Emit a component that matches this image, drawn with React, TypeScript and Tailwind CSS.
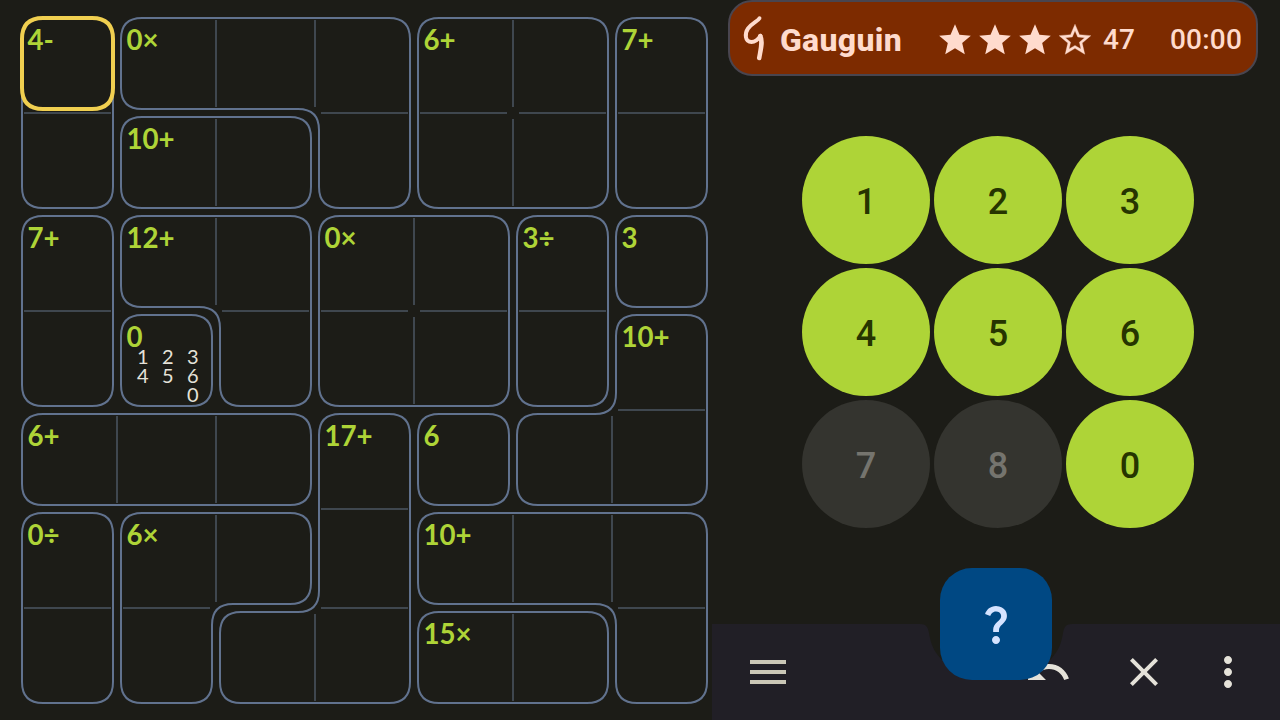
import React from "react";
import { MdClose, MdMenu, MdMoreVert, MdQuestionMark, MdStar, MdStarOutline, MdUndo } from "react-icons/md";

const PITCH = 99;
const INSET = 4;
const RADIUS = 21;

// Each letter is one cage.
const cages = [
  "abbbccd",
  "aeebccd",
  "fgghhij",
  "fkghhil",
  "mmmnoll",
  "pqqnrrr",
  "pqnnssr",
];

const labels: Record<string, string> = {
  "0,0": "4-", "0,1": "0×", "0,4": "6+", "0,6": "7+",
  "1,1": "10+",
  "2,0": "7+", "2,1": "12+", "2,3": "0×", "2,5": "3÷", "2,6": "3",
  "3,1": "0", "3,6": "10+",
  "4,0": "6+", "4,3": "17+", "4,4": "6",
  "5,0": "0÷", "5,1": "6×", "5,4": "10+",
  "6,4": "15×",
};

type Point = [number, number];

function rounded(points: Point[]) {
  const n = points.length;
  let d = "";
  points.forEach((p, i) => {
    const a = points[(i + n - 1) % n];
    const b = points[(i + 1) % n];
    const toward = (q: Point): Point => [
      p[0] + Math.sign(q[0] - p[0]) * RADIUS,
      p[1] + Math.sign(q[1] - p[1]) * RADIUS,
    ];
    d += `${i ? "L" : "M"}${toward(a).join(" ")}Q${p.join(" ")} ${toward(b).join(" ")}`;
  });
  return d + "Z";
}

// Walks the clockwise border of a cage and pulls every corner inwards.
function outline(id: string) {
  const inside = (r: number, c: number) => cages[r]?.[c] === id;
  const next = new Map<string, Point>();
  for (let r = 0; r < 7; r++) {
    for (let c = 0; c < 7; c++) {
      if (!inside(r, c)) continue;
      if (!inside(r - 1, c)) next.set(`${c},${r}`, [c + 1, r]);
      if (!inside(r, c + 1)) next.set(`${c + 1},${r}`, [c + 1, r + 1]);
      if (!inside(r + 1, c)) next.set(`${c + 1},${r + 1}`, [c, r + 1]);
      if (!inside(r, c - 1)) next.set(`${c},${r + 1}`, [c, r]);
    }
  }
  const first = [...next.keys()][0];
  const loop: Point[] = [];
  let key = first;
  do {
    loop.push(key.split(",").map(Number) as Point);
    key = next.get(key)!.join(",");
  } while (key !== first);

  const corners: Point[] = [];
  loop.forEach((p, i) => {
    const a = loop[(i + loop.length - 1) % loop.length];
    const b = loop[(i + 1) % loop.length];
    const [ix, iy] = [p[0] - a[0], p[1] - a[1]];
    const [ox, oy] = [b[0] - p[0], b[1] - p[1]];
    if (ix === ox && iy === oy) return;
    corners.push([p[0] * PITCH + (-iy - oy) * INSET, p[1] * PITCH + (ix + ox) * INSET]);
  });
  return rounded(corners);
}

const cageIds = [...new Set(cages.join(""))];

function dividers() {
  let d = "";
  for (let r = 0; r < 7; r++) {
    for (let c = 0; c < 7; c++) {
      const x = c * PITCH;
      const y = r * PITCH;
      if (cages[r][c] === cages[r][c + 1]) d += `M${x + PITCH} ${y + 6}v87`;
      if (cages[r][c] === cages[r + 1]?.[c]) d += `M${x + 6} ${y + PITCH}h87`;
    }
  }
  return d;
}

function Board() {
  return (
    <div className="relative ml-[18px] mt-[14px] grid h-[693px] w-[693px] shrink-0 grid-cols-7 grid-rows-7">
      <svg className="absolute inset-0 overflow-visible" width="693" height="693" fill="none" strokeWidth="2">
        <path d={dividers()} stroke="#3f474f" />
        {cageIds.map((id) => (
          <path key={id} d={outline(id)} stroke="#61728e" />
        ))}
        <path d={rounded([[4, 4], [95, 4], [95, 95], [4, 95]])} stroke="#f0cf50" strokeWidth="4" />
      </svg>
      {cages.flatMap((row, r) =>
        [...row].map((_, c) => (
          <div key={`${r}-${c}`} className="relative pl-[9.4px] pt-[8px]">
            <div className="h-[36px] whitespace-nowrap font-['Lato',sans-serif] text-[27.7px] font-bold leading-[36px] text-[#aed437]">
              {labels[`${r},${c}`]}
            </div>
            {r === 3 && c === 1 && (
              <div className="-mt-[8px] ml-[3.8px] grid w-[75px] grid-cols-3 text-center font-['Lato',sans-serif] text-[20px] leading-[19px] text-[#e5e2d9]">
                {["1", "2", "3", "4", "5", "6", "", "", "0"].map((n, i) => (
                  <span key={i}>{n}</span>
                ))}
              </div>
            )}
          </div>
        )),
      )}
    </div>
  );
}

function Header() {
  return (
    <header className="ml-[16px] flex h-[76px] w-[530px] items-center rounded-[24px] border-2 border-[#49454f] bg-[#7d2b00] text-[#ffdbcd]">
      <svg className="ml-[12px]" width="24" height="48" viewBox="0 0 24 48" fill="none" stroke="currentColor" strokeLinecap="round" strokeLinejoin="round">
        <path d="M17.5 4.2C15.5 7.5 10 9 6 14.5C2.5 19.5 2.8 28 9.5 28C13 28 16 25.5 18.5 21.8" strokeWidth="3.9" />
        <path d="M18.3 22C21 27.5 18.8 35 17.2 44" strokeWidth="4.5" />
      </svg>
      <h1 className="ml-[14px] w-[155px] pt-[4px] font-['Roboto',sans-serif] text-[32px] font-extrabold leading-[40px] tracking-[0.3px]">Gauguin</h1>
      <div className="flex pt-[4px]">
        {[0, 1, 2, 3].map((i) => (
          <span key={i} className="flex w-[40px] justify-center">
            {i < 3 ? (
              <MdStar className="size-[38px]" />
            ) : (
              <MdStarOutline className="size-[38px] stroke-current [stroke-width:0.2]" />
            )}
          </span>
        ))}
      </div>
      <span className="ml-[8px] pt-[4px] font-['Roboto',sans-serif] text-[28px] font-medium leading-[36px]">47</span>
      <span className="ml-auto mr-[14px] pt-[4px] font-['Roboto',sans-serif] text-[28px] font-medium leading-[36px] tracking-[0.2px]">00:00</span>
    </header>
  );
}

function Keypad() {
  return (
    <div className="ml-[90px] mt-[60px] grid w-[392px] grid-cols-3 gap-[4px]">
      {["1", "2", "3", "4", "5", "6", "7", "8", "0"].map((n) => (
        <button
          key={n}
          className={`flex size-[128px] items-center justify-center rounded-full pt-[3px] font-['Roboto',sans-serif] text-[36px] font-medium ${
            n === "7" || n === "8" ? "bg-[#34342f] text-[#75746e]" : "bg-[#aed437] text-[#263500]"
          }`}
        >
          {n}
        </button>
      ))}
    </div>
  );
}

function BottomBar() {
  return (
    <footer className="relative mt-auto flex h-[96px] w-[568px] items-center">
      <svg className="absolute inset-0" width="568" height="96" fill="#211f26">
        <path d="M0 0H208C214 0 216 3 217 9C219 21 222 27 229 35L250 50H318L339 35C346 27 349 21 351 9C352 3 354 0 360 0H568V96H0Z" />
      </svg>
      <MdMenu className="relative ml-[32px] size-[48px] text-[#cac7b6]" />
      <MdUndo className="relative ml-[232px] size-[48px] text-[#e5e2d9]" />
      <MdClose className="relative ml-[48px] size-[48px] text-[#e5e2d9]" />
      <MdMoreVert className="relative ml-[36px] size-[48px] text-[#e5e2d9]" />
      <button className="absolute -top-[56px] left-[228px] flex size-[112px] items-center justify-center rounded-[32px] bg-[#004883] text-[#d5e3ff]">
        <MdQuestionMark className="size-[48px]" />
      </button>
    </footer>
  );
}

export default function App() {
  return (
    <main className="flex h-[720px] w-[1280px] overflow-hidden bg-[#1c1c17]">
      <section className="w-[712px] shrink-0">
        <Board />
      </section>
      <section className="flex w-[568px] flex-col">
        <Header />
        <Keypad />
        <BottomBar />
      </section>
    </main>
  );
}
